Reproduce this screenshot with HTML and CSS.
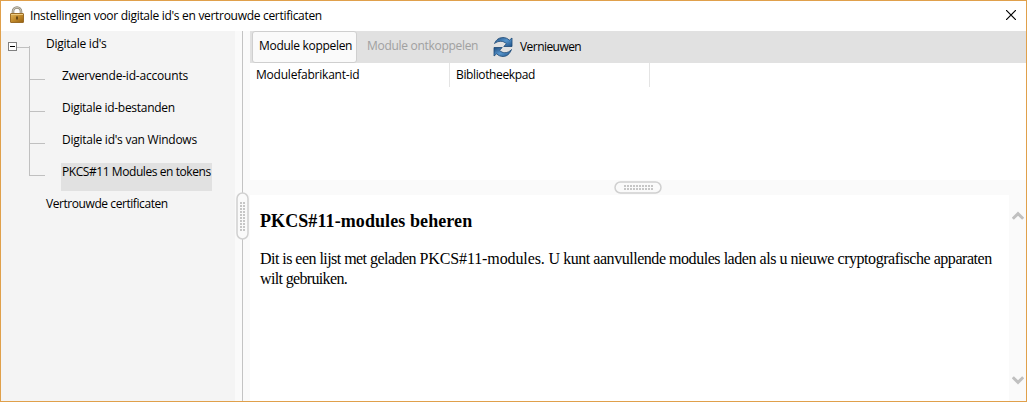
FILE: index.html
```
<!DOCTYPE html>
<html lang="nl">
<head>
<meta charset="utf-8">
<title>Instellingen voor digitale id's en vertrouwde certificaten</title>
<link rel="stylesheet" href="styles.css">
</head>
<body>
<div class="window">
  <header class="titlebar">
    <svg class="lock" width="16" height="18" viewBox="0 0 16 18">
      <defs><linearGradient id="brass" x1="0" y1="0" x2="1" y2="1"><stop offset="0" stop-color="#e3b75c"/><stop offset=".5" stop-color="#c18a2c"/><stop offset="1" stop-color="#96600f"/></linearGradient></defs>
      <path d="M4 9V5.500a4 4 0 0 1 8 0V9" fill="none" stroke="#8c8575" stroke-width="2.600"/>
      <path d="M4 9V5.500a4 4 0 0 1 8 0V9" fill="none" stroke="#c9c4b6" stroke-width="1.200"/>
      <rect x="1.500" y="7.500" width="13" height="9" rx=".5" fill="url(#brass)" stroke="#9b6d28"/>
      <path d="M2 8.500h12" stroke="#eccb82"/>
      <path d="M8 10.500v3" stroke="#4c340f" stroke-width="1.500"/>
    </svg>
    <h1 class="title">Instellingen voor digitale id's en vertrouwde certificaten</h1>
    <svg class="close" width="10" height="10" viewBox="0 0 10 10"><path d="M0 0l10 10M10 0L0 10" stroke="#000" stroke-width="1.200"/></svg>
  </header>
  <div class="content">
    <nav class="sidebar">
      <svg class="branches" width="40" height="142" viewBox="0 0 40 142" fill="none" shape-rendering="crispEdges">
        <path d="M9 6.500h13M21.500 5v130M22 38.500h15M22 70.500h15M22 102.500h15M21 134.500h16" stroke="#c0c0c0"/>
        <rect x=".5" y="1.500" width="8" height="8" fill="#fff" stroke="#808080"/>
        <path d="M2 5.500h5" stroke="#000"/>
      </svg>
      <ul class="tree">
        <li><span class="item digital">Digitale id's</span>
          <ul class="subtree">
            <li><span class="item roaming">Zwervende-id-accounts</span></li>
            <li><span class="item files">Digitale id-bestanden</span></li>
            <li><span class="item windows">Digitale id's van Windows</span></li>
            <li><span class="item modules selected">PKCS#11 Modules en tokens</span></li>
          </ul>
        </li>
        <li><span class="item trusted">Vertrouwde certificaten</span></li>
      </ul>
    </nav>
    <div class="splitter vertical">
      <svg class="grip" width="13" height="48" viewBox="0 0 13 48"><rect x="1" y="1" width="11" height="46" rx="5.500" fill="#fafafa" stroke="#d0d0d0" stroke-width="1.500"/><path d="M5 10v29M8 10v29" stroke="#c6c6c6" stroke-width="2" stroke-dasharray="2 1"/></svg>
    </div>
    <main class="main">
      <div class="toolbar">
        <button class="button attach"><span>Module koppelen</span></button>
        <button class="button detach" disabled><span>Module ontkoppelen</span></button>
        <button class="button refresh">
          <svg width="22" height="22" viewBox="0 0 22 22">
            <defs><linearGradient id="blue" x1="0" y1="0" x2="1" y2="1"><stop offset="0" stop-color="#1d4a7c"/><stop offset=".5" stop-color="#5795cc"/><stop offset="1" stop-color="#1f5288"/></linearGradient></defs>
            <g fill="url(#blue)" stroke="#1a4674" stroke-width=".8" stroke-linejoin="round">
              <path d="M2.500 7.500C4.200 3.500 7.300 1.500 10.800 1.500c2.700 0 4.900 1 6.500 2.700L20 2v8.500h-8.200l2.600-2.800C12.800 6.200 11 5.300 8.800 5.300 6.200 5.300 4.200 6.200 2.500 7.500z"/>
              <path d="M19.500 13.500c-1.700 4.500-4.800 7-8.300 7-2.700 0-4.900-1-6.500-2.700L2 20v-8.500h8.200l-2.600 2.800c1.500 1.700 3.300 2.400 5.200 2.400 2.800 0 5-1.200 6.700-3.200z"/>
            </g>
          </svg>
          <span>Vernieuwen</span>
        </button>
      </div>
      <section class="table">
        <div class="column vendor"><span>Modulefabrikant-id</span></div>
        <div class="column library"><span>Bibliotheekpad</span></div>
      </section>
      <div class="splitter horizontal">
        <svg width="48" height="13" viewBox="0 0 48 13"><rect x="1" y="1" width="46" height="11" rx="5.500" fill="#fafafa" stroke="#d0d0d0" stroke-width="1.500"/><path d="M10 5h29M10 8h29" stroke="#c6c6c6" stroke-width="2" stroke-dasharray="2 1"/></svg>
      </div>
      <section class="details">
        <article class="document">
          <h2 class="heading">PKCS#11-modules beheren</h2>
          <p class="description"><span class="intro">Dit is een lijst met geladen </span><span class="standard">PKCS#11-modules. </span><span class="usage">U kunt aanvullende modules laden als u nieuwe cryptografische apparaten</span><br><span class="ending">wilt gebruiken.</span></p>
        </article>
        <div class="scrollbar">
          <svg width="12" height="10" viewBox="0 0 12 10"><path d="M.8 7.800L6 2.600l5.200 5.200" fill="none" stroke="#c0c0c0" stroke-width="3"/></svg>
          <svg width="12" height="10" viewBox="0 0 12 10"><path d="M.8 2.200L6 7.400l5.200-5.200" fill="none" stroke="#c0c0c0" stroke-width="3"/></svg>
        </div>
      </section>
    </main>
  </div>
</div>
</body>
</html>
```
FILE: styles.css
```
* { box-sizing: border-box; }
body { margin: 0; font: 12px/16px "Open Sans", "Noto Sans", sans-serif; color: #000; white-space: nowrap; }
.window { width: 1027px; height: 402px; display: flex; flex-direction: column; border: 1px solid #e0a04b; background: #fff; overflow: hidden; }
.titlebar { height: 30px; flex: none; display: flex; align-items: center; padding: 0 10px 0 8px; }
.lock { margin-bottom: 2px; }
.title { margin: 0 0 0 5px; font-size: 12px; font-weight: 400; line-height: 16px; letter-spacing: -.3px; }
.close { margin-left: auto; margin-top: -2px; }
.content { flex: 1; min-height: 0; display: flex; }
.sidebar { width: 234px; display: flex; align-items: flex-start; background: #f4f4f4; padding: 4px 0 0 7px; }
.branches { margin-top: 6px; flex: none; }
.tree, .subtree { list-style: none; margin: 0; padding: 0; }
.tree { margin-left: -3px; }
.subtree { padding-left: 16px; }
.item { display: block; width: max-content; height: 28px; margin-bottom: 4px; padding: 1px 1px 0; }
.digital, .windows { letter-spacing: -.25px; }
.roaming { letter-spacing: -.2px; }
.files { letter-spacing: -.29px; }
.modules, .trusted { letter-spacing: -.43px; }
.selected { background: #e1e1e1; }
.splitter { background: #fafafa; display: flex; flex: none; align-items: center; justify-content: center; }
.vertical { width: 15px; background: linear-gradient(90deg, #fafafa 7px, #c3c3c3 7px, #c3c3c3 8px, #fafafa 8px); }
.horizontal { height: 15px; }
.main { flex: 1; min-width: 0; display: flex; flex-direction: column; }
.toolbar { height: 32px; flex: none; display: flex; background: #e1e1e1; padding-left: 2px; }
.button { font: inherit; color: #000; background: none; border: 0; padding: 0; display: flex; align-items: center; height: 32px; }
.attach { width: 105px; background: #fafafa; border: 1px solid #cfcfcf; border-radius: 3px; padding: 0 0 2px 6px; letter-spacing: -.3px; }
.detach { width: 125px; color: #a0a0a0; padding: 0 0 2px 10px; letter-spacing: -.3px; }
.refresh { gap: 6px; padding-left: 10px; letter-spacing: -.55px; }
.table { height: 117px; flex: none; display: flex; }
.column { width: 200px; height: 24px; padding: 4px 6px; border-right: 1px solid #e4e4e4; }
.vendor { letter-spacing: -.22px; }
.library { letter-spacing: -.37px; }
.details { flex: 1; display: flex; min-height: 0; }
.document { flex: 1; min-width: 0; padding: 16px 0 0 10px; font-family: "Liberation Serif", serif; font-size: 16px; line-height: 20px; }
.heading { margin: 0; font-size: 18px; line-height: 20px; width: max-content; letter-spacing: .09px; }
.description { margin: 18px 0 0; }
.intro { letter-spacing: -.54px; }
.standard { letter-spacing: -.11px; }
.usage { letter-spacing: -.46px; }
.ending { letter-spacing: -.65px; }
.scrollbar { width: 17px; flex: none; background: #fafafa; display: flex; flex-direction: column; align-items: center; justify-content: space-between; padding: 16px 0; }
```
